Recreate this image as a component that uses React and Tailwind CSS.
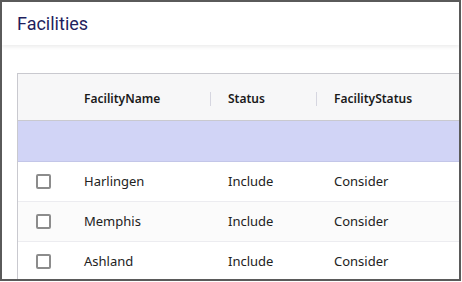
import { useState } from 'react';

// Facilities grid: title bar, column header, filter row and selectable rows
const facilities = [
  { name: 'Harlingen', status: 'Include', facilityStatus: 'Consider' },
  { name: 'Memphis', status: 'Include', facilityStatus: 'Consider' },
  { name: 'Ashland', status: 'Include', facilityStatus: 'Consider' },
];

const font = { fontFamily: "'Noto Sans', 'Open Sans', sans-serif" };

function HeaderCell({ children, width, divider }) {
  return (
    <div className={`relative flex h-full items-center pl-[18px] ${width}`}>
      {divider && <span className="absolute left-0 top-[18px] h-[14px] w-px bg-[#d6d6e0]" />}
      <span className="pt-[3px] text-[12px] font-semibold text-[#1a1a1a]">{children}</span>
    </div>
  );
}

export default function App() {
  const [checked, setChecked] = useState({});

  return (
    <div className="h-[282px] w-[462px] bg-white">
      <div className="h-[281px] w-[461px] overflow-hidden border-2 border-[#5a5a5a] bg-white">
        {/* Title bar */}
        <div className="flex h-[43px] items-center pl-[15px] shadow-[0_2px_4px_rgba(0,0,0,0.08)]">
          <h1
            className="text-[18px] font-normal text-[#1f1f5e]"
            style={{ fontFamily: "Roboto, 'Noto Sans', sans-serif" }}
          >
            Facilities
          </h1>
        </div>

        {/* Grid */}
        <div className="ml-[15px] mt-[28px] w-[520px] border-l border-t border-[#c9c9cf]" style={font}>
          <div className="flex h-[47px] border-b border-[#c9c9cf] bg-[#f7f7f8]">
            <div className="w-[48px]" />
            <HeaderCell width="w-[144px]">FacilityName</HeaderCell>
            <HeaderCell width="w-[106px]" divider>Status</HeaderCell>
            <HeaderCell width="w-[180px]" divider>FacilityStatus</HeaderCell>
          </div>

          {/* Filter row */}
          <div className="h-[41px] border-b border-[#c3c6e8] bg-[#d1d4f6]" />

          {facilities.map((f, i) => (
            <div
              key={f.name}
              className={`flex h-[40px] items-center border-b border-[#ececf0] text-[13px] text-[#222] ${
                i % 2 === 1 ? 'bg-[#fbfbfb]' : 'bg-white'
              }`}
            >
              <div className="flex w-[48px] items-center pl-[18px]">
                <button
                  type="button"
                  onClick={() => setChecked((c) => ({ ...c, [f.name]: !c[f.name] }))}
                  className={`h-[15px] w-[15px] rounded-[2px] border-2 border-[#8c8c8c] ${
                    checked[f.name] ? 'bg-[#5b5fc7]' : 'bg-white'
                  }`}
                />
              </div>
              <div className="w-[144px] pl-[18px]">{f.name}</div>
              <div className="w-[106px] pl-[18px]">{f.status}</div>
              <div className="w-[180px] pl-[18px]">{f.facilityStatus}</div>
            </div>
          ))}
        </div>
      </div>
    </div>
  );
}
